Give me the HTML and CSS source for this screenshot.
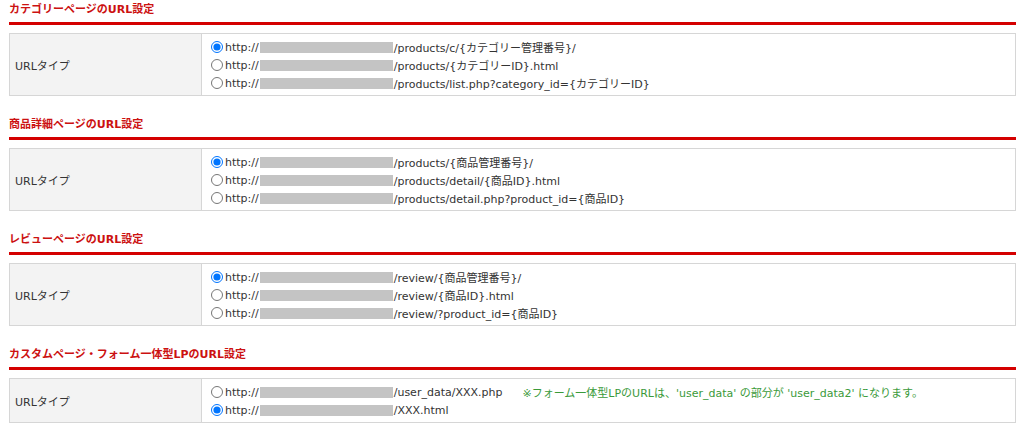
FILE: index.html
```html
<!DOCTYPE html>
<html lang="ja">
<head>
<meta charset="utf-8">
<title>URL設定</title>
<link rel="stylesheet" href="styles.css">
</head>
<body>
<div class="page">
  <section class="sec">
    <h2 class="sec-title">カテゴリーページのURL設定</h2>
    <table class="form">
      <tr>
        <th>URLタイプ</th>
        <td>
          <label class="opt"><input type="radio" name="c" checked>http://<span class="mask"></span>/products/c/{カテゴリー管理番号}/</label>
          <label class="opt"><input type="radio" name="c">http://<span class="mask"></span>/products/{カテゴリーID}.html</label>
          <label class="opt"><input type="radio" name="c">http://<span class="mask"></span>/products/list.php?category_id={カテゴリーID}</label>
        </td>
      </tr>
    </table>
  </section>
  <section class="sec">
    <h2 class="sec-title">商品詳細ページのURL設定</h2>
    <table class="form">
      <tr>
        <th>URLタイプ</th>
        <td>
          <label class="opt"><input type="radio" name="p" checked>http://<span class="mask"></span>/products/{商品管理番号}/</label>
          <label class="opt"><input type="radio" name="p">http://<span class="mask"></span>/products/detail/{商品ID}.html</label>
          <label class="opt"><input type="radio" name="p">http://<span class="mask"></span>/products/detail.php?product_id={商品ID}</label>
        </td>
      </tr>
    </table>
  </section>
  <section class="sec">
    <h2 class="sec-title">レビューページのURL設定</h2>
    <table class="form">
      <tr>
        <th>URLタイプ</th>
        <td>
          <label class="opt"><input type="radio" name="r" checked>http://<span class="mask"></span>/review/{商品管理番号}/</label>
          <label class="opt"><input type="radio" name="r">http://<span class="mask"></span>/review/{商品ID}.html</label>
          <label class="opt"><input type="radio" name="r">http://<span class="mask"></span>/review/?product_id={商品ID}</label>
        </td>
      </tr>
    </table>
  </section>
  <section class="sec">
    <h2 class="sec-title">カスタムページ・フォーム一体型LPのURL設定</h2>
    <table class="form">
      <tr>
        <th>URLタイプ</th>
        <td>
          <label class="opt"><input type="radio" name="u">http://<span class="mask"></span>/user_data/XXX.php<span class="note">※フォーム一体型LPのURLは、'user_data' の部分が 'user_data2' になります。</span></label>
          <label class="opt"><input type="radio" name="u" checked>http://<span class="mask"></span>/XXX.html</label>
        </td>
      </tr>
    </table>
  </section>
</div>
</body>
</html>
```

FILE: styles.css
```css
html, body {
  margin: 0;
  padding: 0;
  background: #ffffff;
}
body {
  font-family: "DejaVu Sans", "Noto Sans CJK JP", sans-serif;
  font-size: 11px;
  color: #333333;
}
.page {
  padding: 0 8px 0 9px;
}
.sec {
  margin-bottom: 19px;
}
.sec-title {
  margin: 0 0 8px;
  padding: 2px 0 4px;
  font-size: 11px;
  line-height: 16px;
  font-weight: bold;
  color: #cc1111;
  border-bottom: 3px solid #d40000;
}
.form {
  width: 100%;
  border-collapse: collapse;
  border: 1px solid #d6d6d6;
}
.form th {
  width: 186px;
  padding: 0 0 0 5px;
  text-align: left;
  font-weight: normal;
  background: #f3f3f3;
  border-right: 1px solid #d6d6d6;
  vertical-align: middle;
  color: #333333;
}
.form td {
  padding: 4px 8px 3px 8px;
  vertical-align: middle;
}
.opt {
  display: flex;
  align-items: center;
  height: 18px;
  white-space: nowrap;
  color: #333333;
}
.opt input {
  width: 12px;
  height: 12px;
  margin: 0 2px 0 1px;
  flex: none;
}
.mask {
  display: inline-block;
  width: 133px;
  height: 11px;
  margin: 0 1px;
  background: #c4c4c4;
}
.note {
  margin-left: 20px;
  color: #3a9a3a;
}
```
